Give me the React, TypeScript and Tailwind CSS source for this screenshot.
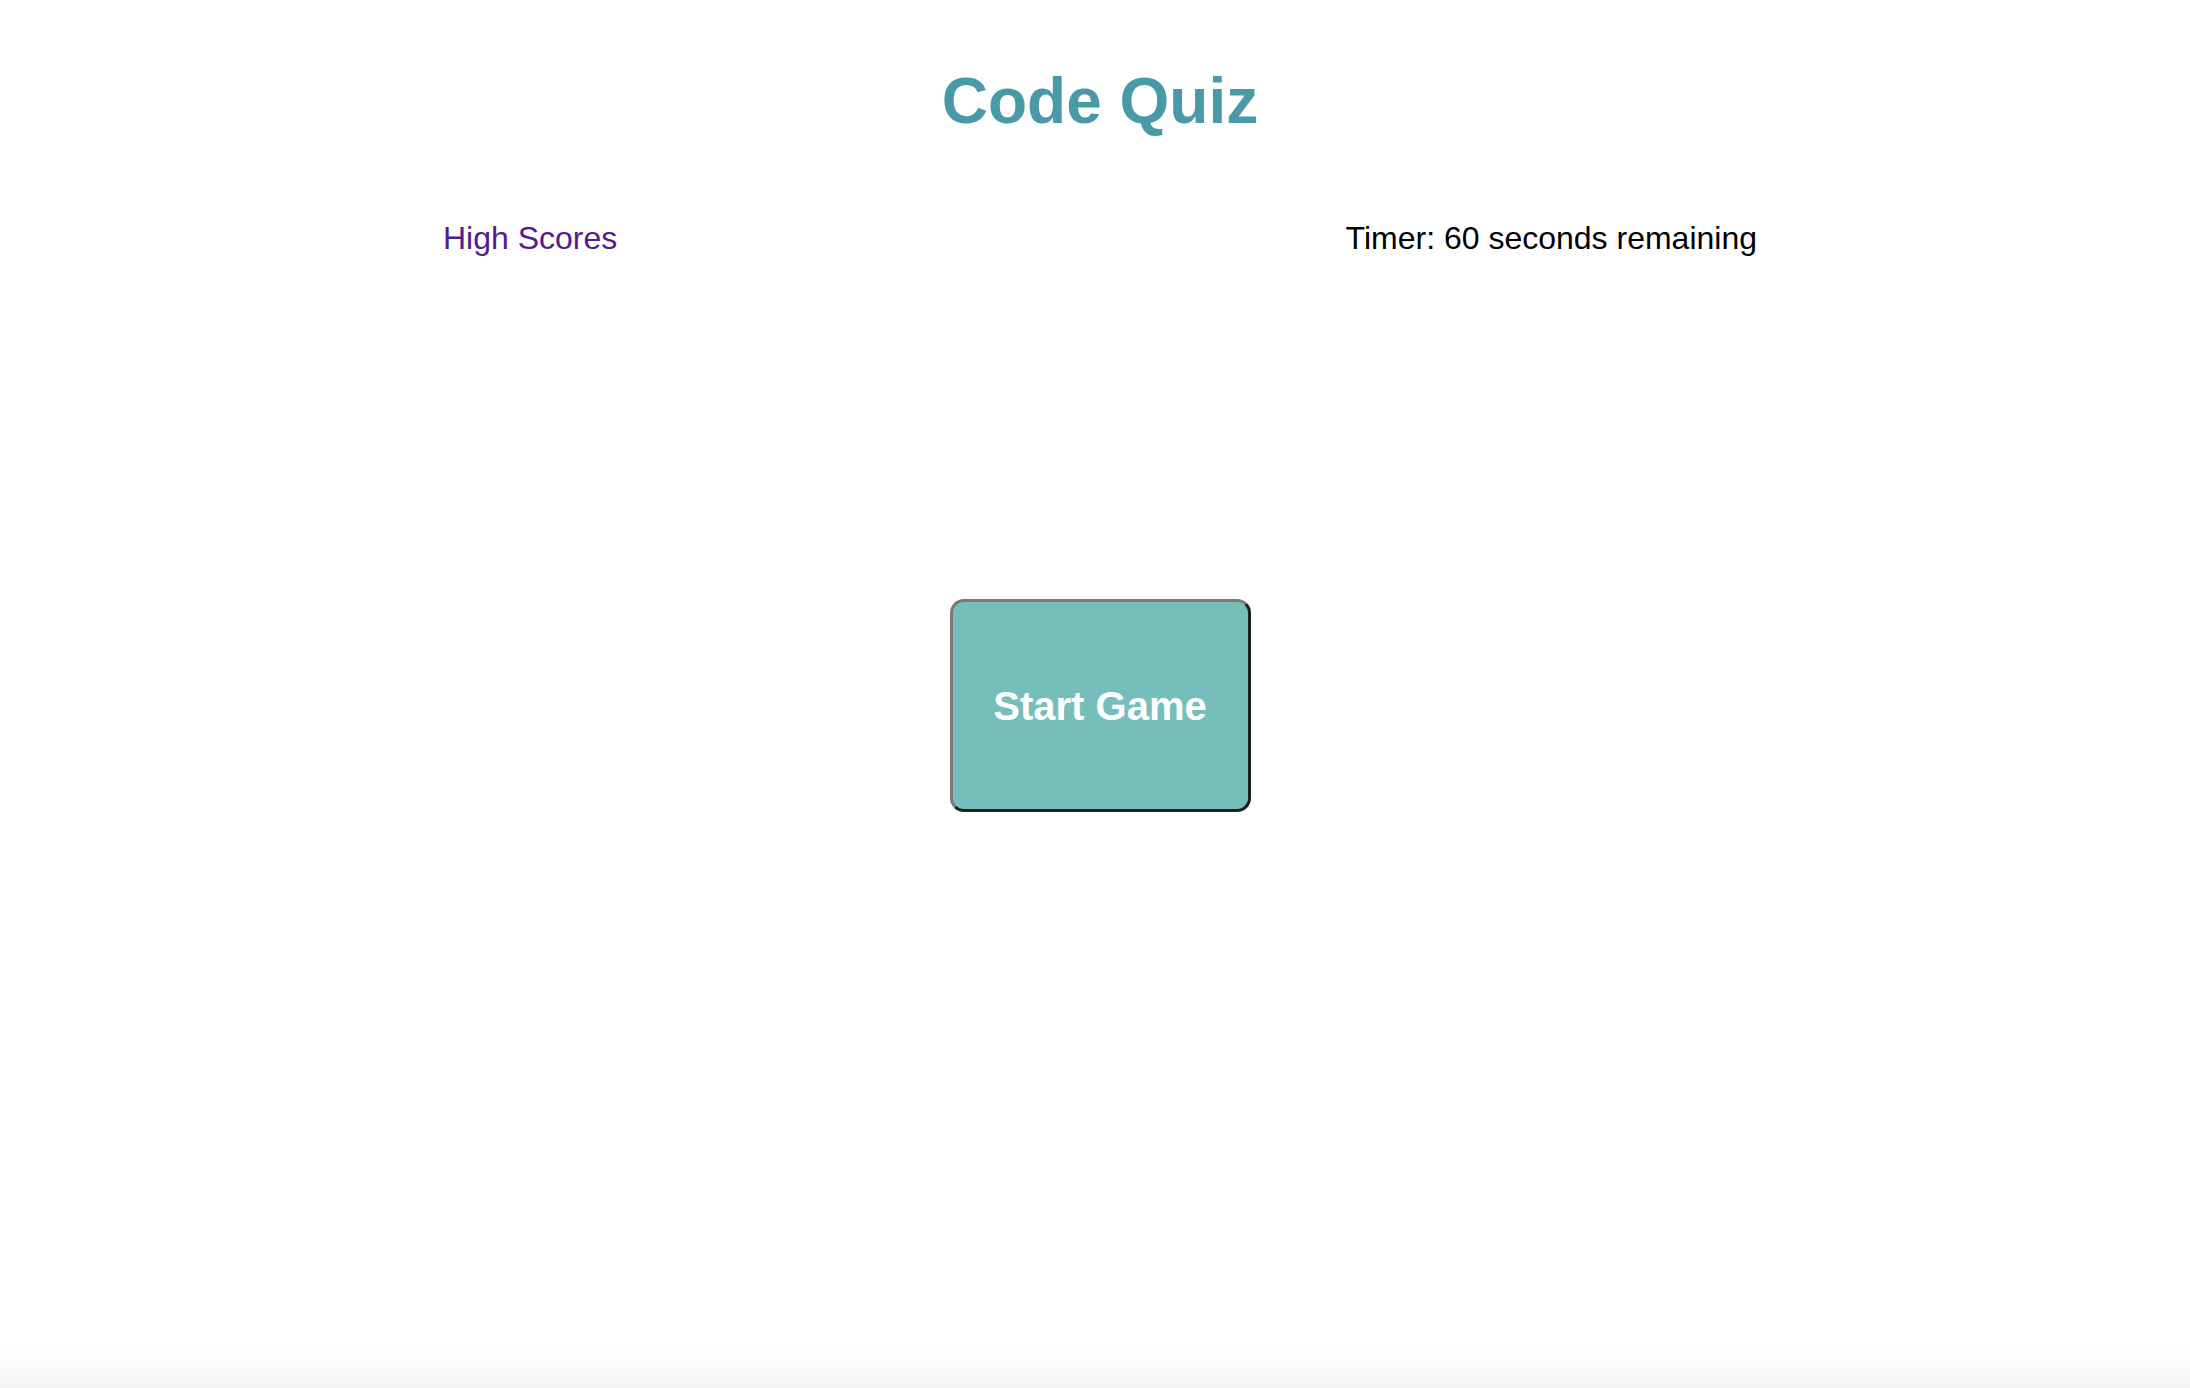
const App = () => {
  return (
    <div
      className="flex h-screen flex-col bg-white text-black"
      style={{ fontFamily: '"Liberation Sans", Arial, sans-serif' }}
    >
      <header className="pl-[10px] pt-[69px]">
        <h1 className="text-center text-[64px] font-bold leading-[64px] text-[#4a99a8]">
          Code Quiz
        </h1>
      </header>

      <nav className="flex flex-row items-start justify-between pl-[443px] pr-[433px] pt-[89px]">
        <a href="#" className="text-[32px] leading-[32px] text-[#551a8b]">
          High Scores
        </a>
        <p className="text-[32px] leading-[32px]">Timer: 60 seconds remaining</p>
      </nav>

      <main className="flex justify-center pl-[10px] pt-[345px]">
        <button className="h-[213px] w-[301px] rounded-[14px] border-[3px] border-t-[#7a7a7a] border-l-[#7a7a7a] border-r-[#1f1f1f] border-b-[#1f1f1f] bg-[#76bebb] text-[40px] font-bold text-white">
          Start Game
        </button>
      </main>

      <div className="mt-auto h-[40px] bg-gradient-to-b from-white to-[#f4f4f4]" />
    </div>
  );
};

export default App;
